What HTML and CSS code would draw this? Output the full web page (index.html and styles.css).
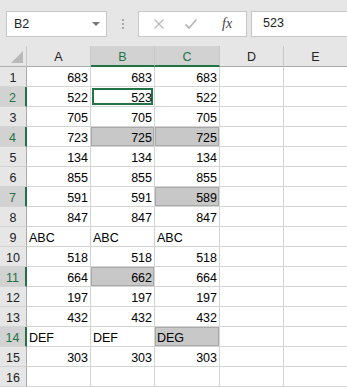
FILE: index.html
```html
<!DOCTYPE html>
<html lang="en">
<head>
    <meta charset="UTF-8">
    <meta name="viewport" content="width=device-width, initial-scale=1.0">
    <title>Sheet1 - Compare Two Columns</title>
    <link rel="stylesheet" href="styles.css">
</head>
<body>
    <div class="formula-bar">
        <div class="name-box">
            <span>B2</span>
            <span class="arrow"></span>
        </div>
        <div class="grip">
            <span></span><span></span><span></span>
        </div>
        <div class="buttons">
            <svg class="btn-icon" width="12" height="12" viewBox="0 0 12 12">
                <path d="M1.5 1.5 L10.5 10.5 M10.5 1.5 L1.5 10.5" stroke="#b8b8b8" stroke-width="1.3" fill="none"/>
            </svg>
            <svg class="btn-icon" width="14" height="12" viewBox="0 0 14 12">
                <path d="M1.5 6.5 L5 10 L12.5 1.5" stroke="#b8b8b8" stroke-width="1.8" fill="none"/>
            </svg>
            <span class="fx">fx</span>
        </div>
        <div class="formula-input">523</div>
    </div>

    <div class="sheet">
        <div class="corner"><span class="corner-mark"></span></div>
        <div class="col-head">A</div>
        <div class="col-head selected">B</div>
        <div class="col-head selected">C</div>
        <div class="col-head">D</div>
        <div class="col-head">E</div>

        <div class="row-head">1</div>
        <div class="cell num">683</div><div class="cell num">683</div><div class="cell num">683</div><div class="cell"></div><div class="cell"></div>

        <div class="row-head selected">2</div>
        <div class="cell num">522</div><div class="cell num active">523</div><div class="cell num">522</div><div class="cell"></div><div class="cell"></div>

        <div class="row-head">3</div>
        <div class="cell num">705</div><div class="cell num">705</div><div class="cell num">705</div><div class="cell"></div><div class="cell"></div>

        <div class="row-head selected">4</div>
        <div class="cell num">723</div><div class="cell num diff">725</div><div class="cell num diff">725</div><div class="cell"></div><div class="cell"></div>

        <div class="row-head">5</div>
        <div class="cell num">134</div><div class="cell num">134</div><div class="cell num">134</div><div class="cell"></div><div class="cell"></div>

        <div class="row-head">6</div>
        <div class="cell num">855</div><div class="cell num">855</div><div class="cell num">855</div><div class="cell"></div><div class="cell"></div>

        <div class="row-head selected">7</div>
        <div class="cell num">591</div><div class="cell num">591</div><div class="cell num diff">589</div><div class="cell"></div><div class="cell"></div>

        <div class="row-head">8</div>
        <div class="cell num">847</div><div class="cell num">847</div><div class="cell num">847</div><div class="cell"></div><div class="cell"></div>

        <div class="row-head">9</div>
        <div class="cell">ABC</div><div class="cell">ABC</div><div class="cell">ABC</div><div class="cell"></div><div class="cell"></div>

        <div class="row-head">10</div>
        <div class="cell num">518</div><div class="cell num">518</div><div class="cell num">518</div><div class="cell"></div><div class="cell"></div>

        <div class="row-head selected">11</div>
        <div class="cell num">664</div><div class="cell num diff">662</div><div class="cell num">664</div><div class="cell"></div><div class="cell"></div>

        <div class="row-head">12</div>
        <div class="cell num">197</div><div class="cell num">197</div><div class="cell num">197</div><div class="cell"></div><div class="cell"></div>

        <div class="row-head">13</div>
        <div class="cell num">432</div><div class="cell num">432</div><div class="cell num">432</div><div class="cell"></div><div class="cell"></div>

        <div class="row-head selected">14</div>
        <div class="cell">DEF</div><div class="cell">DEF</div><div class="cell diff">DEG</div><div class="cell"></div><div class="cell"></div>

        <div class="row-head">15</div>
        <div class="cell num">303</div><div class="cell num">303</div><div class="cell num">303</div><div class="cell"></div><div class="cell"></div>

        <div class="row-head">16</div>
        <div class="cell"></div><div class="cell"></div><div class="cell"></div><div class="cell"></div><div class="cell"></div>
    </div>
</body>
</html>
```

FILE: styles.css
```css
* {
    box-sizing: border-box;
    margin: 0;
    padding: 0;
}

body {
    width: 347px;
    height: 387px;
    overflow: hidden;
    background: #ffffff;
    font-family: "Liberation Sans", Arial, sans-serif;
    color: #000;
}

/* top strip: name box + formula bar */
.formula-bar {
    display: flex;
    align-items: flex-start;
    height: 46px;
    padding: 11px 0 0 6px;
    background: #e6e6e6;
}

.name-box {
    display: flex;
    align-items: center;
    justify-content: space-between;
    width: 101px;
    height: 26px;
    padding: 0 6px 0 7px;
    background: #fff;
    border: 1px solid #c6c6c6;
    font-size: 12.5px;
    color: #222;
}

.arrow {
    width: 0;
    height: 0;
    border-left: 4px solid transparent;
    border-right: 4px solid transparent;
    border-top: 4px solid #777;
}

.grip {
    display: flex;
    flex-direction: column;
    gap: 2px;
    margin: 8px 14px 0 15px;
}

.grip span {
    width: 2px;
    height: 2px;
    background: #a8a8a8;
}

.buttons {
    display: flex;
    align-items: center;
    width: 109px;
    height: 26px;
    padding-left: 14px;
    background: #fff;
    border: 1px solid #c6c6c6;
}

.btn-icon {
    display: block;
    margin-right: 19px;
}

.fx {
    font-family: "Liberation Serif", serif;
    font-style: italic;
    font-size: 14px;
    color: #444;
    margin-left: 5px;
}

.formula-input {
    flex: 1;
    height: 26px;
    margin-left: 4px;
    padding: 4px 0 0 11px;
    background: #fff;
    border: 1px solid #c6c6c6;
    border-right: none;
    font-size: 12.5px;
    color: #222;
}

/* grid */
.sheet {
    display: grid;
    grid-template-columns: 27px 64px 64px 65px 64px 64px;
    grid-template-rows: 21px repeat(16, 20px);
    background: #fff;
    font-size: 12.5px;
}

.corner,
.col-head,
.row-head {
    background: #e6e6e6;
    color: #222;
}

.corner {
    position: relative;
    border-right: 1px solid #c8c8c8;
    border-bottom: 1px solid #ababab;
}

.corner-mark {
    position: absolute;
    right: 3px;
    bottom: 3px;
    width: 0;
    height: 0;
    border-left: 12px solid transparent;
    border-bottom: 12px solid #b9b9b9;
}

.col-head {
    display: flex;
    align-items: flex-end;
    justify-content: center;
    padding-bottom: 2px;
    border-right: 1px solid #c8c8c8;
    border-bottom: 1px solid #ababab;
    line-height: 14px;
}

.col-head.selected {
    background: #d2d2d2;
    color: #217346;
    border-bottom: 2px solid #217346;
    padding-bottom: 1px;
}

.row-head {
    display: flex;
    align-items: flex-end;
    justify-content: center;
    padding-bottom: 1px;
    border-right: 1px solid #ababab;
    border-bottom: 1px solid #d4d4d4;
    line-height: 14px;
}

.row-head.selected {
    background: #d2d2d2;
    color: #217346;
    border-right: 2px solid #217346;
}

.cell {
    display: flex;
    align-items: flex-end;
    padding: 0 2px 1px 2px;
    border-right: 1px solid #d4d4d4;
    border-bottom: 1px solid #d4d4d4;
    line-height: 14px;
    white-space: nowrap;
}

.cell.num {
    justify-content: flex-end;
}

.cell.active {
    box-shadow: inset 0 0 0 1px #fff, inset 0 0 0 3px #217346;
}

.cell.diff {
    background: #c8c8c8;
    box-shadow: inset 0 0 0 1px #a9a9a9;
}
```
